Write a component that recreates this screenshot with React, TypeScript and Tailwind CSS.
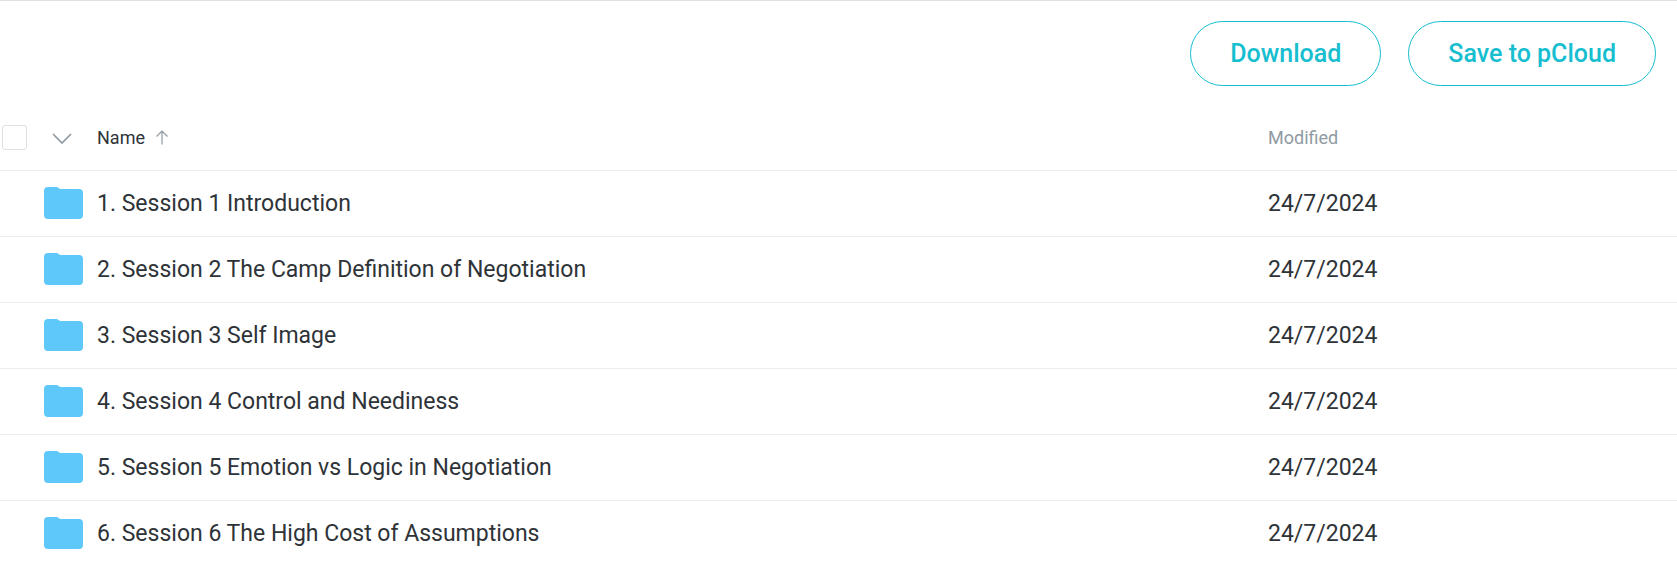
const files = [
  { name: '1. Session 1 Introduction', modified: '24/7/2024' },
  { name: '2. Session 2 The Camp Definition of Negotiation', modified: '24/7/2024' },
  { name: '3. Session 3 Self Image', modified: '24/7/2024' },
  { name: '4. Session 4 Control and Neediness', modified: '24/7/2024' },
  { name: '5. Session 5 Emotion vs Logic in Negotiation', modified: '24/7/2024' },
  { name: '6. Session 6 The High Cost of Assumptions', modified: '24/7/2024' },
];

function FolderIcon() {
  return (
    <svg width="39" height="33" viewBox="0 0 39 33" fill="#5fc8fa" aria-hidden="true">
      <path d="M4 0h8.500c1.600 0 2.400 2 4.500 2h18a4 4 0 0 1 4 4V28a4 4 0 0 1-4 4H4a4 4 0 0 1-4-4V4a4 4 0 0 1 4-4z" />
    </svg>
  );
}

function ChevronIcon() {
  return (
    <svg width="20" height="14" viewBox="0 0 20 14" fill="none" stroke="#8f9aa3" strokeWidth="1.7" aria-hidden="true">
      <path d="M1 3l9 9 9-9" />
    </svg>
  );
}

function ArrowUpIcon() {
  return (
    <svg width="12" height="15" viewBox="0 0 12 15" fill="none" stroke="#8f9aa3" strokeWidth="1.2" aria-hidden="true">
      <path d="M6 14.500V1M0.500 6.500L6 1l5.500 5.500" />
    </svg>
  );
}

function ActionButton({ label }: { label: string }) {
  return (
    <button
      type="button"
      className="h-[65px] rounded-full border border-[#17bed0] px-[39px] text-[25px] font-medium text-[#17bed0]"
    >
      {label}
    </button>
  );
}

export default function App() {
  return (
    <main className="border-t border-[#e0e0e0] bg-white font-['Roboto',sans-serif] text-[#2e3338]">
      <div className="flex justify-end gap-[27px] pt-5 pr-[21px] pb-[18px]">
        <ActionButton label="Download" />
        <ActionButton label="Save to pCloud" />
      </div>

      <table className="w-full table-fixed border-separate border-spacing-0 text-left">
        <thead>
          <tr className="h-[67px] text-lg">
            <th className="border-b border-[#ececec] p-0 pt-px font-normal">
              <div className="flex items-center">
                <div className="flex w-[97px] items-center gap-[25px] pl-0.5">
                  <input
                    type="checkbox"
                    aria-label="Select all"
                    className="size-[25px] appearance-none rounded-[3px] border border-[#dfe1e3] bg-white checked:bg-[#17bed0]"
                  />
                  <button type="button" aria-label="Selection options">
                    <ChevronIcon />
                  </button>
                </div>
                <button type="button" className="flex items-center gap-[11px]">
                  Name
                  <ArrowUpIcon />
                </button>
              </div>
            </th>
            <th className="w-[409px] border-b border-[#ececec] p-0 pt-px font-normal text-[#8f9aa3]">
              Modified
            </th>
          </tr>
        </thead>
        <tbody className="text-[23px] leading-8 [&>tr:last-child>td]:border-b-0">
          {files.map((file) => (
            <tr key={file.name} className="h-[66px] last:h-[65px]">
              <td className="border-b border-[#ececec] p-0">
                <div className="flex items-center">
                  <div className="w-[97px] pl-11">
                    <FolderIcon />
                  </div>
                  <a href="#">{file.name}</a>
                </div>
              </td>
              <td className="border-b border-[#ececec] p-0">{file.modified}</td>
            </tr>
          ))}
        </tbody>
      </table>
    </main>
  );
}
